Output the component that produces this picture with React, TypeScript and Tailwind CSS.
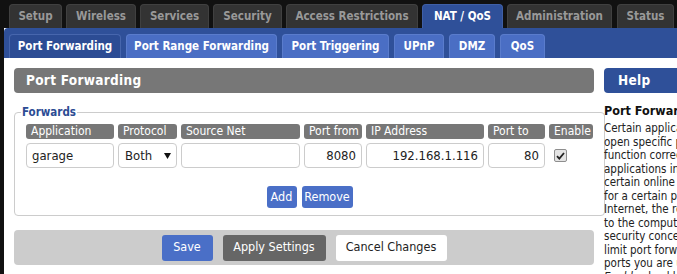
import type { ReactNode } from 'react'

const font = { fontFamily: '"DejaVu Sans Condensed", "DejaVu Sans", sans-serif' }

const topTabs = [
  { label: 'Setup', w: 'w-[53px]' },
  { label: 'Wireless', w: 'w-[70px]' },
  { label: 'Services', w: 'w-[69px]' },
  { label: 'Security', w: 'w-[69px]' },
  { label: 'Access Restrictions', w: 'w-[132px]' },
  { label: 'NAT / QoS', w: 'w-[81px]', active: true },
  { label: 'Administration', w: 'w-[105px]' },
  { label: 'Status', w: 'w-[57px]' },
]

const subTabs = [
  { label: 'Port Forwarding', w: 'w-[112px]', active: true },
  { label: 'Port Range Forwarding', w: 'w-[151px]' },
  { label: 'Port Triggering', w: 'w-[107px]' },
  { label: 'UPnP', w: 'w-[50px]' },
  { label: 'DMZ', w: 'w-[46px]' },
  { label: 'QoS', w: 'w-[45px]' },
]

const helpLines = [
  'Certain applications may require to',
  'open specific ports in order for it to',
  'function correctly. Examples of these',
  'applications include servers and',
  'certain online games. When a request',
  'for a certain port comes in from the',
  'Internet, the router will route the data',
  'to the computer you specify. Due to',
  'security concerns, you may want to',
  'limit port forwarding to only those',
  'ports you are using, and uncheck the',
]

function HeadCell({ children }: { children: ReactNode }) {
  return (
    <div className="h-[15px] bg-[#777] rounded-[3px] text-white text-[12px] leading-[15px] pl-[5px] whitespace-nowrap overflow-hidden">
      {children}
    </div>
  )
}

function Field({ children, right }: { children?: ReactNode; right?: boolean }) {
  return (
    <div
      className={`h-[25px] border border-[#ccc] rounded-[4px] bg-white text-[13px] leading-[23px] text-[#222] px-[5px] whitespace-nowrap ${right ? 'text-right' : ''}`}
    >
      {children}
    </div>
  )
}

export default function App() {
  return (
    <div className="w-[677px] h-[274px] overflow-hidden bg-[#111]" style={font}>
      {/* top nav */}
      <div className="flex gap-[4px] pl-[9px] pt-[4px] h-[28px]">
        {topTabs.map((t) => (
          <div
            key={t.label}
            className={`${t.w} shrink-0 h-[24px] rounded-t-[4px] border border-b-0 text-center text-[11.5px] font-bold leading-[23px] ${
              t.active ? 'bg-[#2f5099] text-white border-[#3f5fa6]' : 'bg-[#333] text-[#999] border-[#404040]'
            } ${t.label === 'Status' ? 'ml-[1px]' : ''}`}
          >
            {t.label}
          </div>
        ))}
      </div>

      <div className="ml-[4px] bg-white">
        {/* sub nav */}
        <div className="bg-[#2f5099] rounded-tl-[4px] h-[30px] pt-[6px] pl-[5px] flex gap-[5px]">
          {subTabs.map((t) => (
            <div
              key={t.label}
              className={`${t.w} shrink-0 h-[24px] rounded-t-[4px] border border-b-0 text-center text-white text-[11.5px] font-bold leading-[23px] ${
                t.active ? 'bg-[#2c4c94] border-[#4766ad]' : 'bg-[#4a6ec4] border-[#5a7ccc]'
              }`}
            >
              {t.label}
            </div>
          ))}
        </div>

        {/* content */}
        <div className="flex gap-[10px] pl-[10px] pt-[10px] h-[216px]">
          <div className="w-[580px] shrink-0">
            <div className="h-[25px] bg-[#777] rounded-[4px] text-white font-bold text-[13.5px] leading-[25px] pl-[12px] tracking-[0.3px]">
              Port Forwarding
            </div>

            <fieldset className="mt-[12px] w-[590px] border border-[#ccc] rounded-[4px]">
              <legend className="ml-[6px] px-[1px] text-[11.5px] font-bold text-[#2c4c94] leading-[14px]">Forwards</legend>
              <div className="px-[11px] pt-[5px] pb-[7px]">
                <div className="grid grid-cols-[88px_59px_119px_58px_118px_57px_44px] gap-x-[4px] gap-y-[4px] w-[567px]">
                  <HeadCell>Application</HeadCell>
                  <HeadCell>Protocol</HeadCell>
                  <HeadCell>Source Net</HeadCell>
                  <HeadCell>Port from</HeadCell>
                  <HeadCell>IP Address</HeadCell>
                  <HeadCell>Port to</HeadCell>
                  <HeadCell>Enable</HeadCell>

                  <Field>garage</Field>
                  <div className="h-[25px] border border-[#ccc] rounded-[4px] bg-white text-[13px] leading-[23px] text-[#222] pl-[6px] pr-[5px] flex justify-between items-center">
                    <span>Both</span>
                    <svg width="7" height="6" viewBox="0 0 7 6">
                      <path d="M0 0h7L3.5 6z" fill="#111" />
                    </svg>
                  </div>
                  <Field />
                  <Field right>8080</Field>
                  <Field right>192.168.1.116</Field>
                  <Field right>80</Field>
                  <div className="flex items-center pl-[5px]">
                    <div className="w-[13px] h-[13px] border border-[#8e8e8e] rounded-[2px] bg-[#e4e4e4] flex items-center justify-center">
                      <svg width="9" height="8" viewBox="0 0 9 8">
                        <path d="M1 4.2 3.3 6.6 8 1" stroke="#222" strokeWidth="1.8" fill="none" />
                      </svg>
                    </div>
                  </div>
                </div>

                <div className="mt-[18px] flex justify-center gap-[5px]">
                  <button className="h-[22px] w-[30px] rounded-[3px] bg-[#4a6fc7] text-white text-[12.5px] leading-[22px]">Add</button>
                  <button className="h-[22px] w-[51px] rounded-[3px] bg-[#4a6fc7] text-white text-[12.5px] leading-[22px]">Remove</button>
                </div>
              </div>
            </fieldset>

            <div className="mt-[14px] h-[35px] bg-[#ccc] rounded-[4px] flex items-center justify-center gap-[10px]">
              <button className="h-[26px] w-[51px] rounded-[3px] bg-[#4a6fc7] text-white text-[12.5px]">Save</button>
              <button className="h-[26px] w-[103px] rounded-[3px] bg-[#666] text-white text-[12.5px]">Apply Settings</button>
              <button className="h-[26px] w-[111px] rounded-[3px] bg-white text-[#222] text-[12.5px]">Cancel Changes</button>
            </div>
          </div>

          {/* help */}
          <div className="w-[200px] shrink-0">
            <div className="h-[25px] bg-[#2f5099] rounded-[4px] text-white font-bold text-[13.5px] leading-[25px] pl-[14px] tracking-[0.3px]">
              Help
            </div>
            <div className="mt-[10px] text-[12.5px] font-bold text-[#111] leading-[16px] whitespace-nowrap">Port Forwarding</div>
            <div className="mt-[3px] text-[11.5px] leading-[13.5px] text-[#222]">
              {helpLines.map((l) => (
                <div key={l} className="whitespace-nowrap">
                  {l}
                </div>
              ))}
              <div className="whitespace-nowrap">
                <i>Enable</i> checkbox after you are finished.
              </div>
            </div>
          </div>
        </div>
      </div>
    </div>
  )
}
